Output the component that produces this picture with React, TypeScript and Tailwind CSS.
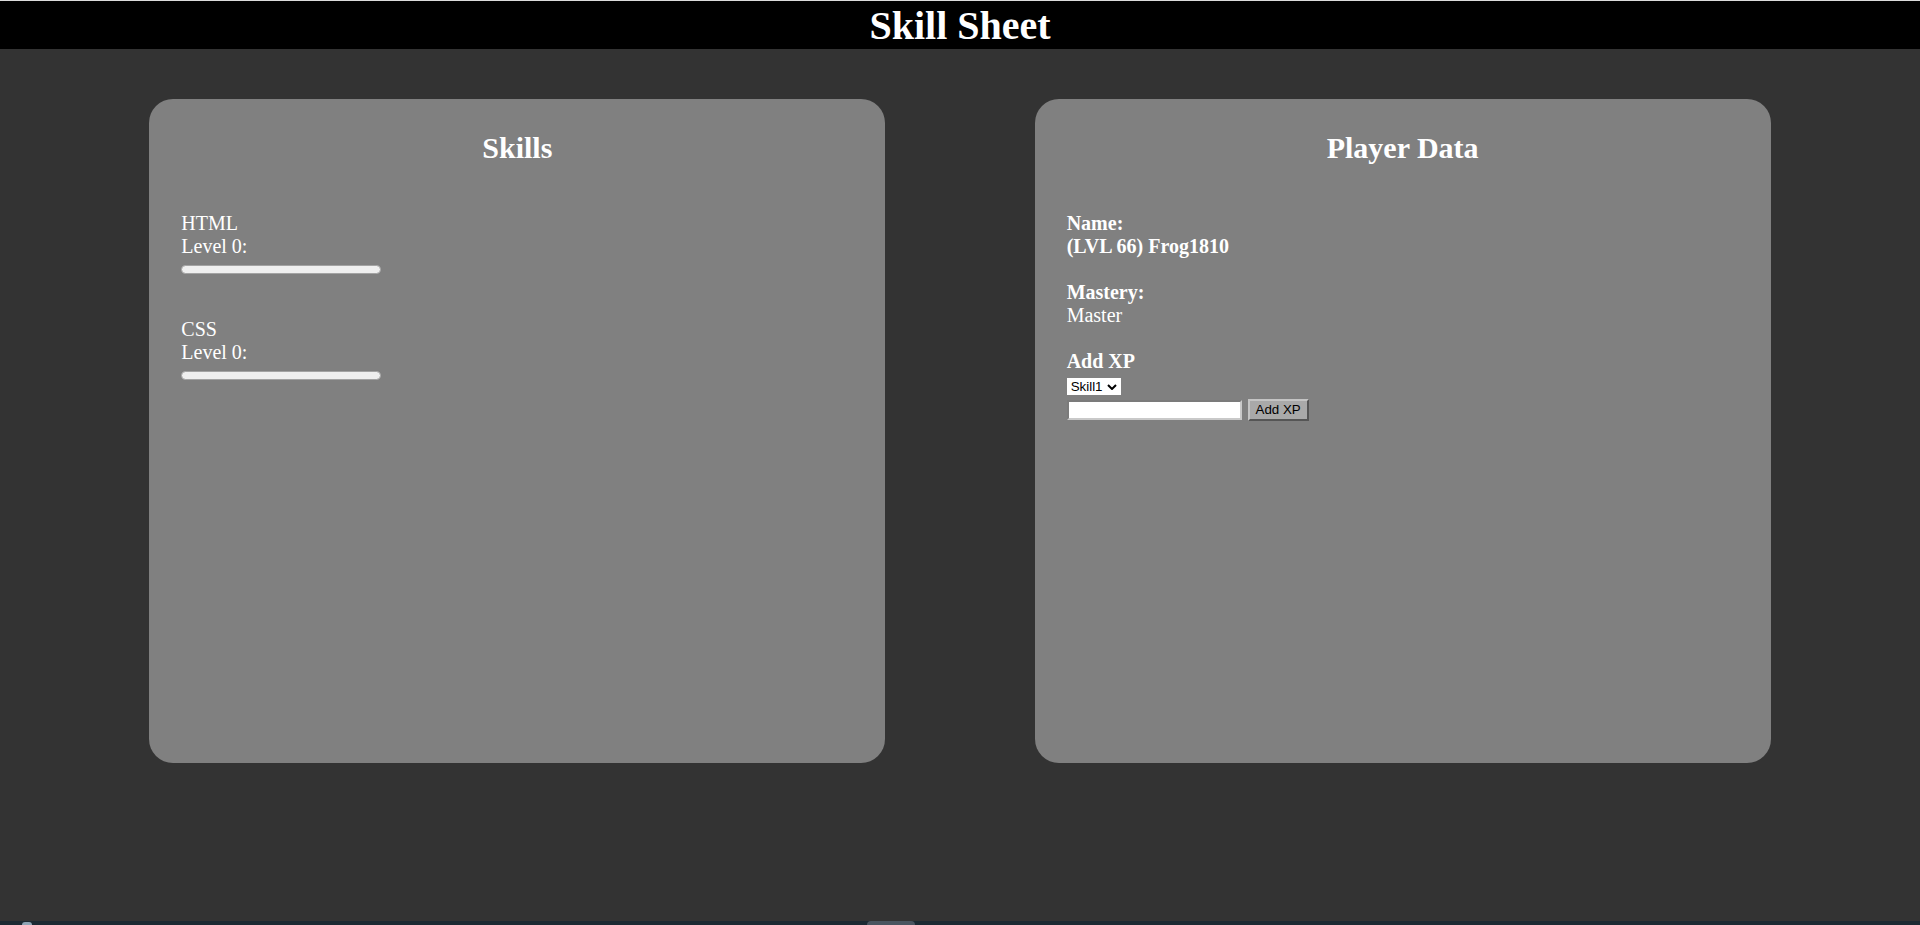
import React from "react";

const serif = { fontFamily: '"Liberation Serif", "Times New Roman", serif' };
const sans = { fontFamily: '"Liberation Sans", Arial, sans-serif' };

function SkillBar() {
  return (
    <div className="mt-[7px] h-[9px] w-[200px] rounded-full border border-[#a3a3a3] bg-[#efefef]" />
  );
}

function Skill({ name }: { name: string }) {
  return (
    <div className="flex flex-col">
      <div className="leading-[23px]">{name}</div>
      <div className="leading-[23px]">Level 0:</div>
      <SkillBar />
    </div>
  );
}

export default function App() {
  return (
    <div
      className="flex h-[925px] w-[1920px] flex-col overflow-hidden bg-[#333333] text-white"
      style={serif}
    >
      <div className="h-[1px] w-full bg-[#dcdcdc]" />
      <header className="flex h-[48px] w-full justify-center bg-black">
        <h1 className="pt-[2px] text-[40px] font-bold leading-[46px]">Skill Sheet</h1>
      </header>
      <main className="flex flex-1 items-start justify-evenly pt-[50px]">
        <section className="h-[664px] w-[736px] rounded-[24px] bg-[#808080] p-8 text-[20px]">
          <h2 className="text-center text-[30px] font-bold leading-[34px]">Skills</h2>
          <div className="mt-[47px] flex flex-col gap-[44px]">
            <Skill name="HTML" />
            <Skill name="CSS" />
          </div>
        </section>
        <section className="h-[664px] w-[736px] rounded-[24px] bg-[#808080] p-8 text-[20px]">
          <h2 className="text-center text-[30px] font-bold leading-[34px]">Player Data</h2>
          <div className="mt-[47px] flex flex-col leading-[23px]">
            <div className="font-bold">Name:</div>
            <div className="font-bold">(LVL 66) Frog1810</div>
            <div className="mt-[23px] font-bold">Mastery:</div>
            <div>Master</div>
            <div className="mt-[23px] font-bold">Add XP</div>
            <div className="relative mt-[5px] h-[17px] w-[54px] bg-white">
              <select
                className="block h-[17px] w-[54px] appearance-none bg-white py-0 pl-[4px] text-[13.33px] leading-[15px] text-black outline-none"
                style={sans}
                defaultValue="Skill1"
              >
                <option value="Skill1">Skill1</option>
                <option value="Skill2">Skill2</option>
              </select>
              <svg
                className="pointer-events-none absolute right-[4px] top-[6px]"
                width="10"
                height="6"
                viewBox="0 0 10 6"
              >
                <path d="M1 1 L5 5 L9 1" fill="none" stroke="black" strokeWidth="2" />
              </svg>
            </div>
            <div className="mt-[4px] flex items-center gap-[6px]">
              <input
                type="text"
                className="h-[20px] w-[175px] border-2 border-t-[#7b7b7b] border-l-[#7b7b7b] border-b-[#c9c9c9] border-r-[#c9c9c9] bg-white px-[2px] text-[13.33px] text-black outline-none"
                style={sans}
              />
              <button
                className="flex h-[22px] w-[61px] items-center justify-center border-2 border-t-[#c4c4c4] border-l-[#c4c4c4] border-b-[#555555] border-r-[#555555] bg-[#a9a9a9] text-[13.33px] leading-[16px] text-black"
                style={sans}
              >
                Add XP
              </button>
            </div>
          </div>
        </section>
      </main>
      <div className="relative h-[4px] w-full bg-[#1c2a33]">
        <div className="absolute left-[867px] top-0 h-[4px] w-[48px] rounded-t-[4px] bg-[#4a5560]" />
        <div className="absolute left-[22px] top-[1px] h-[3px] w-[10px] rounded-t-full bg-[#8fa5b5]" />
      </div>
    </div>
  );
}
